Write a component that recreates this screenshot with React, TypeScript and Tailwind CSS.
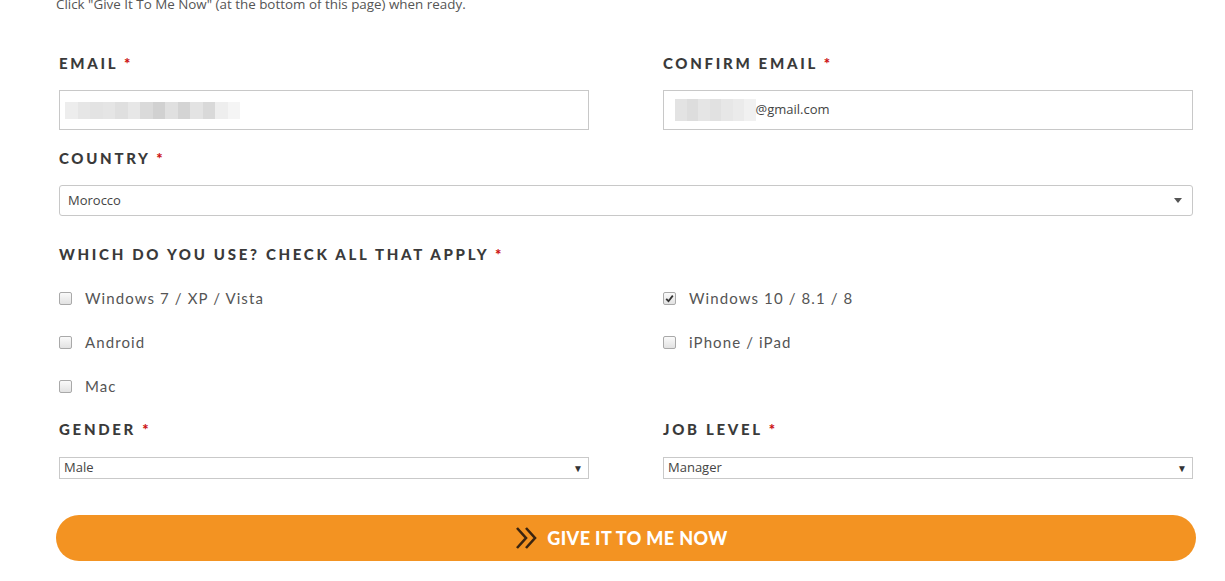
import { FC } from "react";

const emailTiles = ["#ededed", "#e6e6e6", "#e3e3e3", "#e5e5e5", "#dfdfdf", "#e7e7e7", "#dadada", "#d1d1d1", "#e0e0e0", "#d4d4d4", "#e3e3e3", "#d9d9d9", "#eeeeee", "#f5f5f5"];
const confirmTiles = ["#e3e3e3", "#dddddd", "#e5e5e5", "#e1e1e1", "#e7e7e7", "#ebebeb", "#f1f1f1"];

const Label: FC<{ text: string }> = ({ text }) => (
  <div className="font-['Lato',sans-serif] font-black text-[15px] leading-[20px] tracking-[2.7px] text-[#3a3a3a]">
    {text} <span className="text-[#cc1111]">*</span>
  </div>
);

const Check: FC<{ text: string; checked?: boolean }> = ({ text, checked }) => (
  <div className="flex items-center h-[24px]">
    <span className="w-[13px] h-[13px] rounded-[2px] border border-[#a9a9a9] bg-gradient-to-b from-[#fafafa] to-[#e2e2e2] flex items-center justify-center">
      {checked && (
        <svg width="9" height="9" viewBox="0 0 9 9">
          <path d="M1.2 4.8 L3.5 7.2 L7.8 1.6" fill="none" stroke="#333" strokeWidth="1.8" />
        </svg>
      )}
    </span>
    <span className="ml-[13px] font-['Lato',sans-serif] text-[15px] tracking-[1.1px] text-[#555]">{text}</span>
  </div>
);

const SmallSelect: FC<{ value: string }> = ({ value }) => (
  <div className="h-[22px] border border-[#c9c9c9] flex items-center justify-between pl-[4px] pr-[5px] font-['Open_Sans',sans-serif] text-[13px] text-[#444]">
    <span>{value}</span>
    <span className="text-[10px] text-[#333]">▼</span>
  </div>
);

const App: FC = () => {
  return (
    <div className="w-[1225px] h-[581px] overflow-hidden bg-white pl-[56px] pr-[29px]">
      <div className="-mt-[6px] font-['Open_Sans',sans-serif] text-[13.4px] leading-[20px] text-[#555]">
        Click "Give It To Me Now" (at the bottom of this page) when ready.
      </div>

      <div className="px-[3px]">
        <div className="grid grid-cols-2 gap-x-[74px] mt-[39px]">
          <div>
            <Label text="EMAIL" />
            <div className="mt-[17px] h-[40px] border border-[#c8c8c8] flex items-center pl-[5px]">
              <div className="flex h-[17px]">
                {emailTiles.map((c, i) => (
                  <span key={i} className="w-[12.5px] h-full" style={{ backgroundColor: c }} />
                ))}
              </div>
            </div>
          </div>
          <div>
            <Label text="CONFIRM EMAIL" />
            <div className="mt-[17px] h-[40px] border border-[#c8c8c8] flex items-center pl-[11px] font-['Open_Sans',sans-serif] text-[13px] text-[#444]">
              <div className="flex h-[22px]">
                {confirmTiles.map((c, i) => (
                  <span key={i} className="w-[11.5px] h-full" style={{ backgroundColor: c }} />
                ))}
              </div>
              <span>@gmail.com</span>
            </div>
          </div>
        </div>

        <div className="mt-[18px]">
          <Label text="COUNTRY" />
          <div className="mt-[17px] h-[31px] rounded-[3px] border border-[#c8c8c8] flex items-center justify-between pl-[8px] pr-[10px] font-['Open_Sans',sans-serif] text-[13px] text-[#444]">
            <span>Morocco</span>
            <svg width="8" height="5" viewBox="0 0 8 5">
              <path d="M0 0 H8 L4 5 Z" fill="#555" />
            </svg>
          </div>
        </div>

        <div className="mt-[28px]">
          <Label text="WHICH DO YOU USE? CHECK ALL THAT APPLY" />
          <div className="grid grid-cols-2 gap-x-[74px] gap-y-[20px] mt-[22px]">
            <Check text="Windows 7 / XP / Vista" />
            <Check text="Windows 10 / 8.1 / 8" checked />
            <Check text="Android" />
            <Check text="iPhone / iPad" />
            <Check text="Mac" />
          </div>
        </div>

        <div className="grid grid-cols-2 gap-x-[74px] mt-[21px]">
          <div>
            <Label text="GENDER" />
            <div className="mt-[18px]">
              <SmallSelect value="Male" />
            </div>
          </div>
          <div>
            <Label text="JOB LEVEL" />
            <div className="mt-[18px]">
              <SmallSelect value="Manager" />
            </div>
          </div>
        </div>
      </div>

      <button className="mt-[36px] w-full h-[46px] rounded-full bg-[#f39322] flex items-center justify-center gap-[8px] pr-[9px]">
        <svg width="24" height="24" viewBox="0 0 24 24">
          <path d="M2 2 L11 12 L2 22 M11 2 L20 12 L11 22" fill="none" stroke="#3a2410" strokeWidth="2.6" />
        </svg>
        <span className="font-['Lato',sans-serif] font-black text-[18px] tracking-[0.4px] text-white">GIVE IT TO ME NOW</span>
      </button>
    </div>
  );
};

export default App;
